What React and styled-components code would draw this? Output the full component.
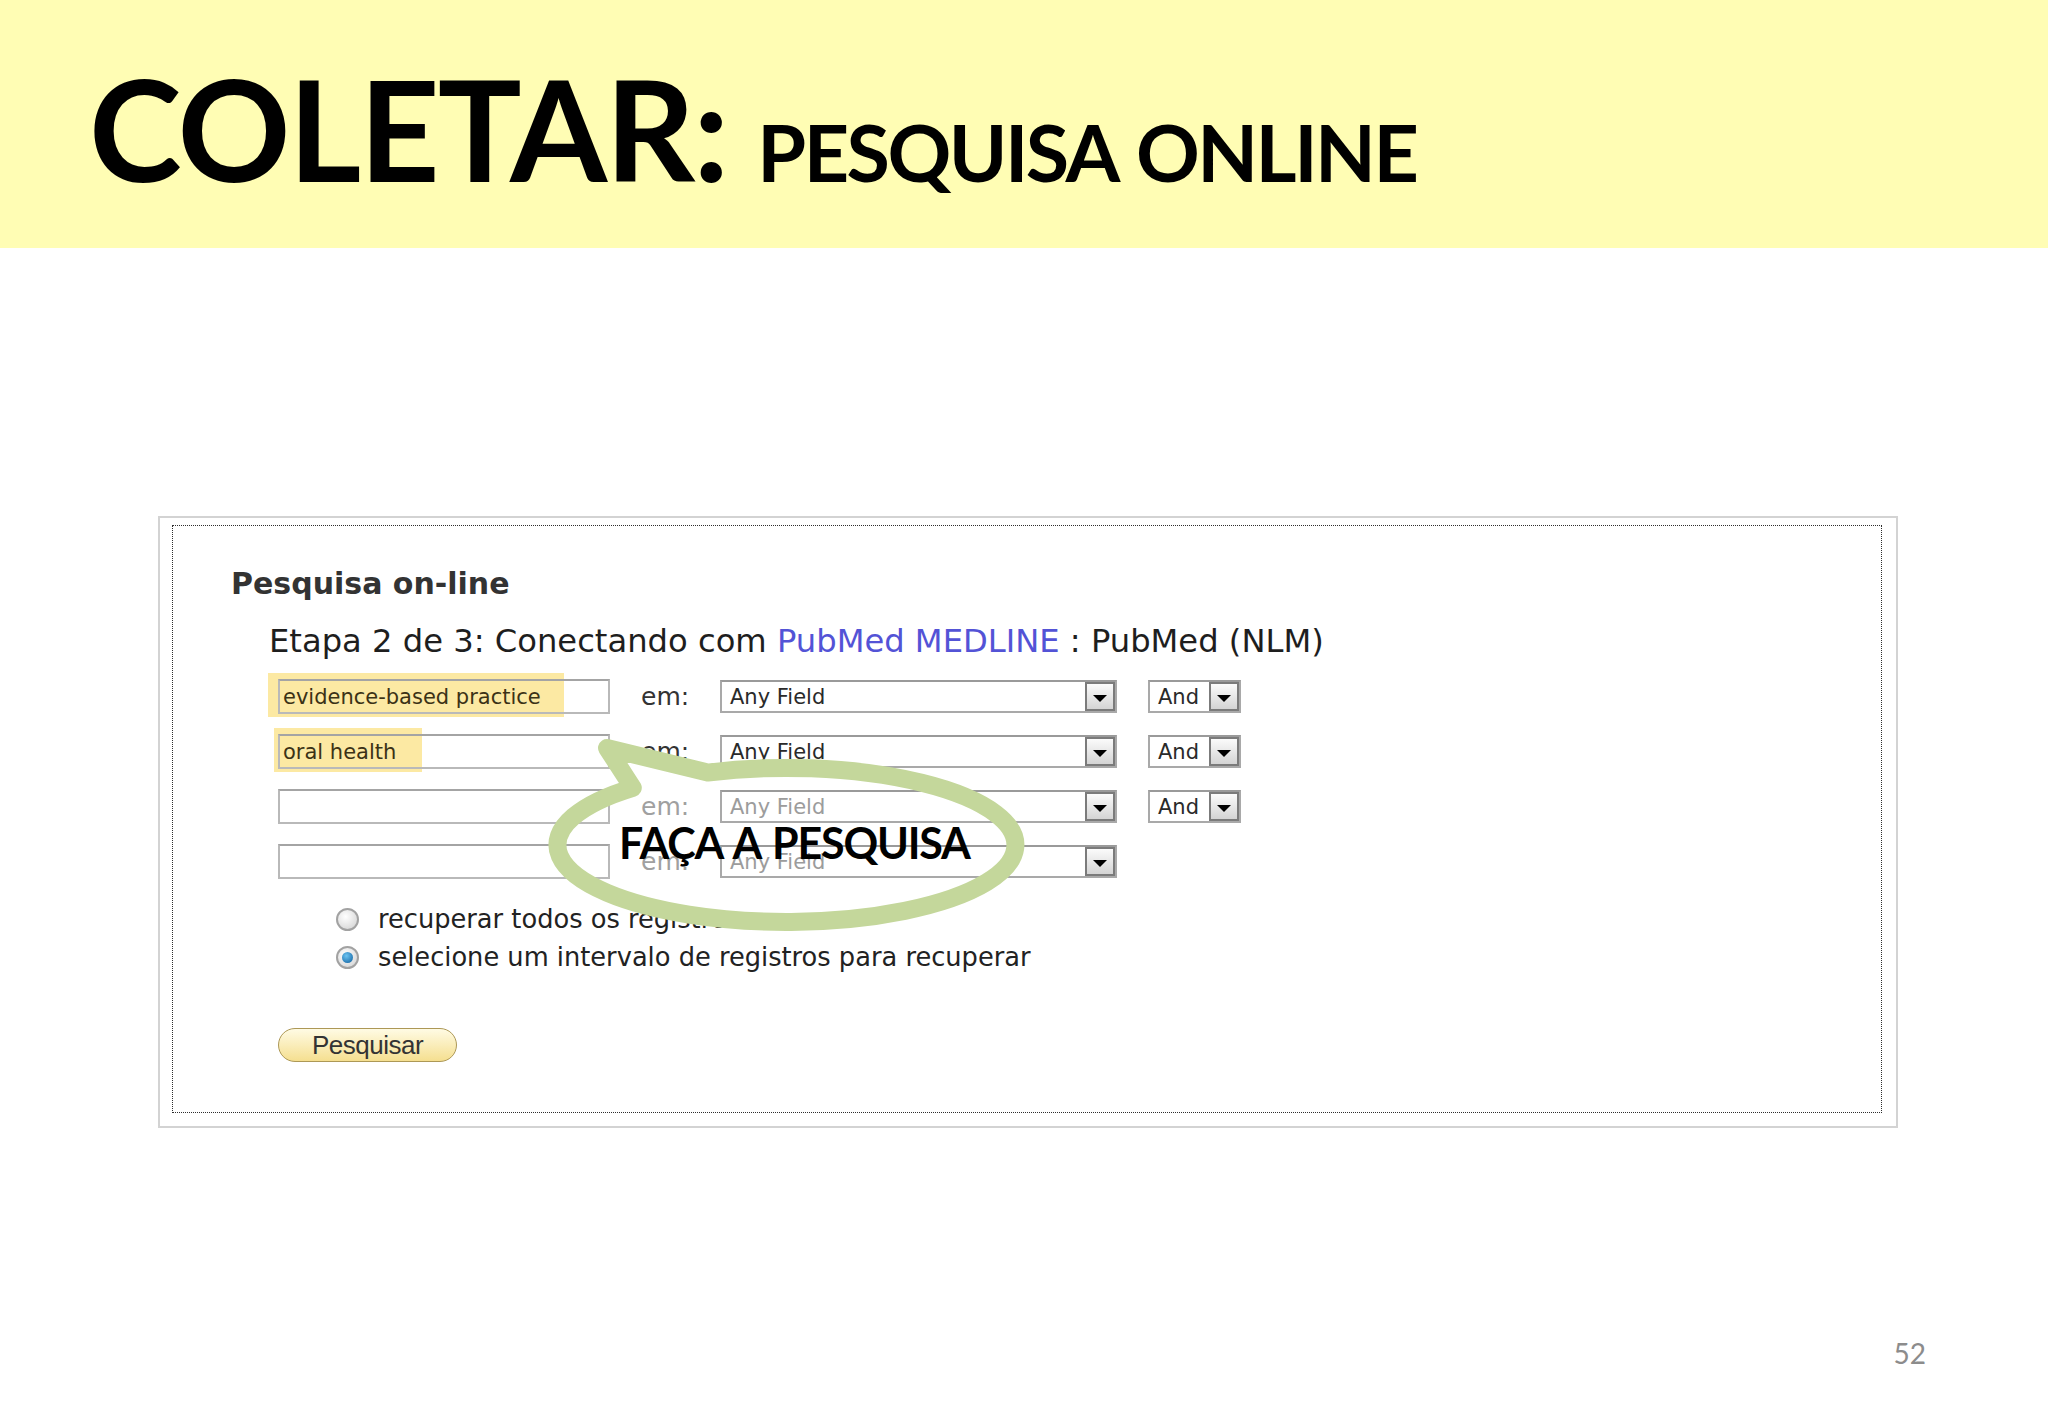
import React from "react";
import styled, { createGlobalStyle } from "styled-components";

const GlobalStyle = createGlobalStyle`
	html, body {
		margin: 0;
		padding: 0;
		background: #ffffff;
	}
	body {
		width: 2048px;
		height: 1418px;
		overflow: hidden;
	}
`;

const rows = [
	{ term: "evidence-based practice", mark: { left: -10, width: 296 }, join: true },
	{ term: "oral health", mark: { left: -4, width: 148 }, join: true },
	{ term: "", muted: true, join: true },
	{ term: "", muted: true, join: false },
];

const App = () => {
	return (
		<Slide>
			<GlobalStyle />
			<Header>
				<BigTitle>COLETAR:</BigTitle>
				<SubTitle>PESQUISA ONLINE</SubTitle>
			</Header>
			<Main>
				<Shot>
					<Dotted>
						<FormTitle>Pesquisa on-line</FormTitle>
						<StepLine>
							Etapa 2 de 3: Conectando com <Link>PubMed MEDLINE</Link> : PubMed (NLM)
						</StepLine>
						<Rows>
							{rows.map((r, i) => (
								<Row key={i}>
									<InputWrap>
										{r.mark && (
											<Highlight $left={r.mark.left} $width={r.mark.width} />
										)}
										<TextBox>{r.term}</TextBox>
									</InputWrap>
									<FieldLabel $muted={r.muted}>em:</FieldLabel>
									<Select $w={397} $muted={r.muted}>
										<span>Any Field</span>
										<ArrowBox>
											<Triangle />
										</ArrowBox>
									</Select>
									{r.join && (
										<JoinSelect $w={93}>
											<span>And</span>
											<ArrowBox>
												<Triangle />
											</ArrowBox>
										</JoinSelect>
									)}
								</Row>
							))}
						</Rows>
						<Radios>
							<RadioRow>
								<RadioDot />
								<RadioText>recuperar todos os registros</RadioText>
							</RadioRow>
							<RadioRow>
								<RadioDot $checked />
								<RadioText>selecione um intervalo de registros para recuperar</RadioText>
							</RadioRow>
						</Radios>
						<SearchButton>Pesquisar</SearchButton>
					</Dotted>
					<Callout>
						<svg width="520" height="230" viewBox="0 0 520 230">
							<path
								d="M 175.7 35.6 A 229 77 0 1 1 100.8 50.8 L 75 11 Z"
								fill="none"
								stroke="#c4d79b"
								strokeWidth="18"
								strokeLinejoin="round"
							/>
						</svg>
						<CalloutText>FAÇA A PESQUISA</CalloutText>
					</Callout>
				</Shot>
				<Footer>
					<PageNum>52</PageNum>
				</Footer>
			</Main>
		</Slide>
	);
};

const Slide = styled.div`
	width: 2048px;
	height: 1418px;
	display: flex;
	flex-direction: column;
	background: #ffffff;
`;

const Header = styled.header`
	height: 248px;
	box-sizing: border-box;
	background: #fffdb4;
	padding: 58px 0 0 89px;
	display: flex;
	align-items: baseline;
	font-family: Lato, "Open Sans", sans-serif;
	font-weight: 700;
	color: #000;
`;

const BigTitle = styled.span`
	font-size: 140px;
	line-height: 1;
	letter-spacing: -2px;
`;

const SubTitle = styled.span`
	font-size: 79px;
	line-height: 1;
	letter-spacing: -2.5px;
	word-spacing: 4px;
	margin-left: 30px;
`;

const Main = styled.main`
	flex: 1;
	display: flex;
	flex-direction: column;
	padding: 268px 0 0 158px;
`;

const Shot = styled.section`
	position: relative;
	width: 1740px;
	box-sizing: border-box;
	border: 2px solid #d3d3d3;
	padding: 7px 14px 13px 12px;
	background: #fff;
`;

const Dotted = styled.div`
	border: 1px dotted #2e2e2e;
	padding: 40px 0 50px 0;
	display: flex;
	flex-direction: column;
	align-items: flex-start;
	font-family: "DejaVu Sans", Verdana, sans-serif;
`;

const FormTitle = styled.h2`
	margin: 0 0 19px 58px;
	font-size: 30px;
	line-height: 36px;
	font-weight: 700;
	color: #333;
`;

const StepLine = styled.p`
	margin: 0 0 18px 96px;
	font-size: 32.2px;
	line-height: 40px;
	color: #1e1e1e;
	white-space: nowrap;
`;

const Link = styled.span`
	color: #5353d6;
`;

const Rows = styled.div`
	margin-left: 105px;
	display: flex;
	flex-direction: column;
	gap: 20px;
`;

const Row = styled.div`
	display: flex;
	align-items: center;
	height: 35px;
`;

const InputWrap = styled.div`
	position: relative;
	width: 332px;
	height: 35px;
	margin-right: 31px;
`;

const TextBox = styled.div`
	position: relative;
	box-sizing: border-box;
	width: 100%;
	height: 100%;
	border: 2px solid #b9b9b9;
	border-top-color: #a4a4a4;
	padding: 0 3px;
	display: flex;
	align-items: center;
	font-size: 21px;
	color: #3b3216;
	background: transparent;
	white-space: nowrap;
`;

const Highlight = styled.div`
	position: absolute;
	left: ${(p) => p.$left}px;
	top: -6px;
	width: ${(p) => p.$width}px;
	height: 44px;
	background: #fce9a3;
`;

const FieldLabel = styled.span`
	width: 79px;
	font-size: 25px;
	color: ${(p) => (p.$muted ? "#a0a0a0" : "#333")};
`;

const Select = styled.div`
	box-sizing: border-box;
	width: ${(p) => p.$w}px;
	height: 33px;
	border: 2px solid #a9a9a9;
	border-top-color: #9a9a9a;
	background: #fff;
	display: flex;
	align-items: center;
	justify-content: space-between;
	padding-left: 8px;
	font-size: 21px;
	color: ${(p) => (p.$muted ? "#9c9c9c" : "#2a2a2a")};
`;

const JoinSelect = styled(Select)`
	margin-left: 31px;
`;

const ArrowBox = styled.div`
	box-sizing: border-box;
	width: 30px;
	height: 100%;
	border: 2px solid #7b7b7b;
	background: linear-gradient(#fbfbfb, #d4d4d4);
	display: flex;
	align-items: flex-end;
	justify-content: center;
	padding-bottom: 7px;
`;

const Triangle = styled.div`
	width: 0;
	height: 0;
	border-left: 7px solid transparent;
	border-right: 7px solid transparent;
	border-top: 7px solid #000;
`;

const Radios = styled.div`
	margin: 21px 0 0 163px;
	display: flex;
	flex-direction: column;
`;

const RadioRow = styled.div`
	height: 38px;
	display: flex;
	align-items: center;
	gap: 19px;
`;

const RadioDot = styled.span`
	position: relative;
	width: 23px;
	height: 23px;
	box-sizing: border-box;
	border-radius: 50%;
	border: 2px solid #a2a2a2;
	background: radial-gradient(circle at 40% 35%, #ffffff, #cfcfcf);
	&::after {
		content: "";
		display: ${(p) => (p.$checked ? "block" : "none")};
		position: absolute;
		left: 4px;
		top: 4px;
		width: 11px;
		height: 11px;
		border-radius: 50%;
		background: radial-gradient(circle at 40% 35%, #6cc4f2, #0b5c9c);
	}
`;

const RadioText = styled.span`
	font-size: 25.7px;
	color: #222;
	white-space: nowrap;
`;

const SearchButton = styled.button`
	margin: 52px 0 0 105px;
	width: 179px;
	height: 34px;
	border-radius: 17px;
	border: 1.5px solid #ad9856;
	background: linear-gradient(#fffbe4, #f5df90);
	font-family: "Liberation Sans", Arial, sans-serif;
	font-size: 26px;
	letter-spacing: -0.5px;
	color: #333;
	display: flex;
	align-items: center;
	justify-content: center;
	padding: 0;
`;

const Callout = styled.div`
	position: absolute;
	left: 372px;
	top: 219px;
	width: 520px;
	height: 230px;
	pointer-events: none;
	svg {
		display: block;
	}
`;

const CalloutText = styled.span`
	position: absolute;
	left: 87px;
	top: 84px;
	font-family: Lato, "Open Sans", sans-serif;
	font-weight: 700;
	font-size: 43px;
	line-height: 1;
	letter-spacing: -1.2px;
	word-spacing: 3px;
	color: #000;
	white-space: nowrap;
`;

const Footer = styled.footer`
	display: flex;
	justify-content: flex-end;
	padding-right: 122px;
	margin-top: 208px;
`;

const PageNum = styled.span`
	font-family: Lato, "Open Sans", sans-serif;
	font-size: 28px;
	line-height: 34px;
	color: #8c8c8c;
`;

export default App;
